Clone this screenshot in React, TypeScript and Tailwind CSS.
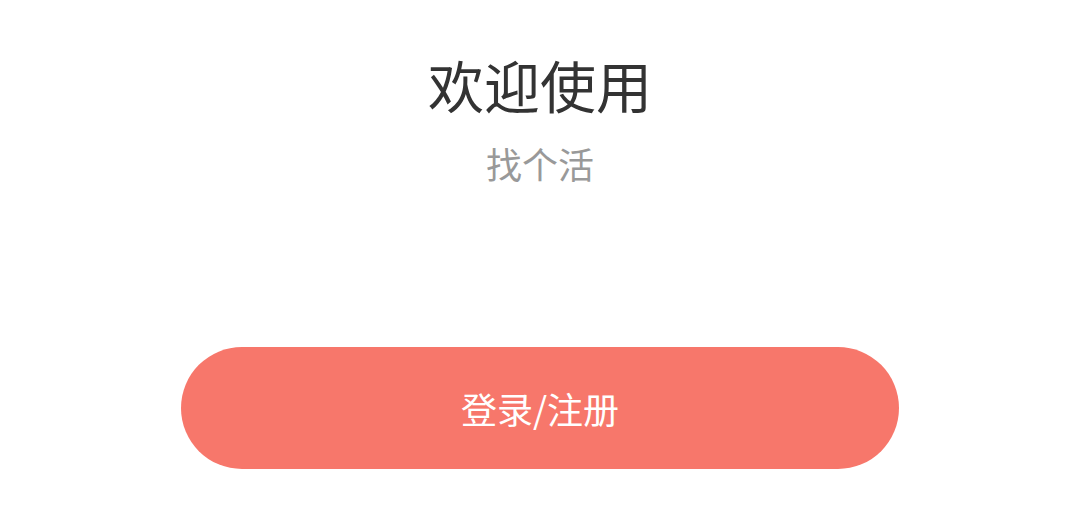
export default function App() {
  return (
    <div
      className="w-[1080px] h-[528px] bg-white flex flex-col items-center"
      style={{ fontFamily: '"Noto Sans CJK SC", "Noto Sans", sans-serif' }}
    >
      <h1 className="mt-[56px] text-[56px] leading-none font-normal text-[#333333]">欢迎使用</h1>
      <p className="mt-[33px] text-[36px] leading-none text-[#999999]">找个活</p>
      <button className="mt-[166px] w-[718px] h-[122px] rounded-full bg-[#f7776b] text-white text-[36px] leading-none flex items-center justify-center">
        登录/注册
      </button>
    </div>
  );
}
